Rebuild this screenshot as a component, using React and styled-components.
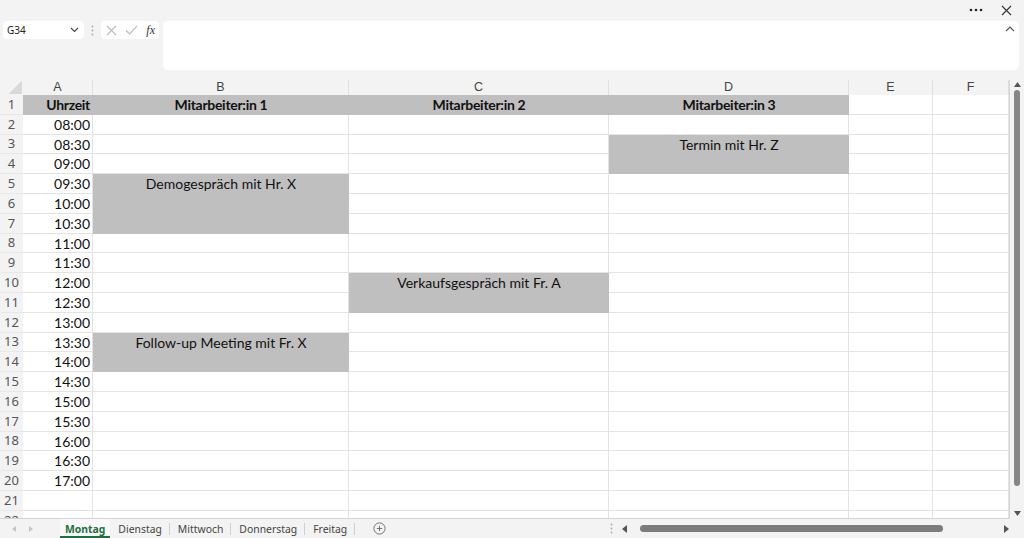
import React from 'react';
import styled, { createGlobalStyle, css } from 'styled-components';

const GlobalStyle = createGlobalStyle`
  html, body { margin: 0; padding: 0; background: #f3f3f3; }
  body { font-family: "Noto Sans", "Liberation Sans", sans-serif; overflow: hidden; }
  * { box-sizing: border-box; }
`;

const Page = styled.div`
  width: 1024px;
  height: 538px;
  display: flex;
  flex-direction: column;
  background: #f3f3f3;
  overflow: hidden;
`;

const TitleBar = styled.div`
  height: 20px;
  display: flex;
  justify-content: flex-end;
  align-items: center;
  gap: 18px;
  padding-right: 12px;
  color: #222;
`;

const FormulaBar = styled.div`
  height: 60px;
  display: flex;
  align-items: flex-start;
  padding: 1px 5px 0 3px;
`;

const NameBox = styled.div`
  width: 81px;
  height: 18px;
  background: #fff;
  border-radius: 4px;
  display: flex;
  align-items: center;
  justify-content: space-between;
  padding: 0 5px 0 4px;
  font-size: 10px;
  color: #222;
`;

const Grip = styled.div`
  width: 17px;
  height: 18px;
  display: flex;
  align-items: center;
  justify-content: center;
`;

const FxBox = styled.div`
  width: 58px;
  height: 18px;
  background: #fff;
  border-radius: 4px;
  display: flex;
  align-items: center;
  justify-content: space-between;
  padding: 0 4px 0 5px;
`;

const FxLabel = styled.span`
  font-family: "Liberation Serif", "DejaVu Serif", serif;
  font-style: italic;
  font-size: 12px;
  color: #333;
`;

const FormulaInput = styled.div`
  margin-left: 4px;
  flex: 1;
  height: 49px;
  background: #fff;
  border-radius: 5px;
  display: flex;
  justify-content: flex-end;
  align-items: flex-start;
  padding: 5px 4px;
`;

const Sheet = styled.div`
  height: 439px;
  display: flex;
`;

const Grid = styled.div`
  width: 1010px;
  height: 439px;
  overflow: hidden;
  display: grid;
  grid-template-columns: 23px 70px 256px 260px 240px 84px 76px;
  grid-template-rows: 15px repeat(22, 19.8px);
  border-right: 1px solid #d4d4d4;
  border-bottom: 1px solid #d4d4d4;
  background: #fff;
`;

const Corner = styled.div`
  background: #f3f3f3
    linear-gradient(to top left, #d9d9d9 50%, transparent 50%) no-repeat right 1px bottom 1px / 14px 13px;
`;

const ColHeader = styled.div`
  background: #f3f3f3;
  border-right: 1px solid #e0e0e0;
  text-align: center;
  font-family: "Liberation Sans", Arial, sans-serif;
  font-size: 12.5px;
  line-height: 15px;
  color: #444;
`;

const RowHeader = styled.div`
  background: #f3f3f3;
  border-bottom: 1px solid #e8e8e8;
  display: flex;
  align-items: center;
  justify-content: center;
  font-size: 13px;
  color: #555;
  line-height: 1;
`;

const Cell = styled.div`
  grid-row: span ${p => p.$span || 1};
  background: ${p => (p.$fill ? '#bfbfbf' : '#fff')};
  border-right: 1px solid ${p => (p.$fill ? '#bfbfbf' : '#e3e3e3')};
  border-bottom: 1px solid ${p => (p.$fill ? '#bfbfbf' : '#e3e3e3')};
  font-family: Lato, "Liberation Sans", sans-serif;
  font-size: 14px;
  line-height: 19px;
  color: #111;
  white-space: nowrap;
  overflow: visible;
  padding: 0 2px 0 3px;
  text-align: ${p => p.$align || 'left'};
  ${p => p.$bold && css`font-weight: 700; letter-spacing: -0.3px;`}
`;

const ScrollCol = styled.div`
  width: 14px;
  display: flex;
  flex-direction: column;
  align-items: center;
  padding: 2px 0 3px;
`;

const VThumb = styled.div`
  width: 6px;
  height: 396px;
  margin-top: 3px;
  border-radius: 3px;
  background: #868686;
`;

const Spacer = styled.div`
  flex: 1;
`;

const TabBar = styled.div`
  height: 19px;
  display: flex;
  align-items: center;
  font-size: 10.4px;
  color: #444;
`;

const NavArrows = styled.div`
  width: 60px;
  display: flex;
  align-items: center;
  gap: 13px;
  padding-left: 12px;
`;

const Tab = styled.div`
  height: 19px;
  display: flex;
  align-items: center;
  padding: 0 8px;
  position: relative;
  white-space: nowrap;
  ${p =>
    p.$active
      ? css`
          color: #1e6e42;
          font-weight: 700;
          font-size: 10.4px;
          padding: 0 5px;
          box-shadow: inset 0 -2px 0 #1e6e42;
          background: #f8f8f8;
        `
      : css`
          &::after {
            content: '';
            position: absolute;
            right: 0;
            top: 4px;
            height: 12px;
            border-right: 1px solid #cfcfcf;
          }
        `}
`;

const AddTab = styled.div`
  margin-left: 18px;
  display: flex;
  align-items: center;
`;

const HScroll = styled.div`
  margin-left: auto;
  width: 414px;
  display: flex;
  align-items: center;
  padding-right: 15px;
`;

const ArrowSlot = styled.span`
  width: 22px;
  display: flex;
  justify-content: center;
`;

const HThumb = styled.div`
  width: 303px;
  height: 7px;
  border-radius: 4px;
  background: #7c7c7c;
  margin-left: 5px;
`;

const cols = ['A', 'B', 'C', 'D', 'E', 'F'];

const times = [];
for (let i = 0; i < 19; i++) {
  const m = 8 * 60 + i * 30;
  times.push(`${String(Math.floor(m / 60)).padStart(2, '0')}:${m % 60 === 0 ? '00' : '30'}`);
}

const events = [
  { row: 3, col: 'D', span: 2, text: 'Termin mit Hr. Z' },
  { row: 5, col: 'B', span: 3, text: 'Demogespräch mit Hr. X' },
  { row: 10, col: 'C', span: 2, text: 'Verkaufsgespräch mit Fr. A' },
  { row: 13, col: 'B', span: 2, text: 'Follow-up Meeting mit Fr. X' },
];

const headers = { A: 'Uhrzeit', B: 'Mitarbeiter:in 1', C: 'Mitarbeiter:in 2', D: 'Mitarbeiter:in 3' };

function buildCells() {
  const out = [];
  const covered = new Set();
  for (let r = 1; r <= 22; r++) {
    out.push(<RowHeader key={`rh${r}`}>{r}</RowHeader>);
    cols.forEach(c => {
      const key = `${c}${r}`;
      if (covered.has(key)) return;
      if (r === 1) {
        if (headers[c]) {
          out.push(
            <Cell key={key} $fill $bold $align={c === 'A' ? 'right' : 'center'}>
              {headers[c]}
            </Cell>
          );
        } else out.push(<Cell key={key} />);
        return;
      }
      const ev = events.find(e => e.row === r && e.col === c);
      if (ev) {
        for (let k = 1; k < ev.span; k++) covered.add(`${c}${r + k}`);
        out.push(
          <Cell key={key} $fill $span={ev.span} $align="center">
            {ev.text}
          </Cell>
        );
        return;
      }
      if (c === 'A' && r >= 2 && r <= 20) {
        out.push(
          <Cell key={key} $align="right">
            {times[r - 2]}
          </Cell>
        );
        return;
      }
      out.push(<Cell key={key} />);
    });
  }
  return out;
}

const Dots = () => (
  <svg width="14" height="4" viewBox="0 0 14 4">
    <circle cx="2" cy="2" r="1.3" fill="#222" />
    <circle cx="7" cy="2" r="1.3" fill="#222" />
    <circle cx="12" cy="2" r="1.3" fill="#222" />
  </svg>
);

const Close = () => (
  <svg width="11" height="11" viewBox="0 0 11 11">
    <path d="M1 1L10 10M10 1L1 10" stroke="#333" strokeWidth="1.1" fill="none" />
  </svg>
);

const VGrip = () => (
  <svg width="3" height="11" viewBox="0 0 3 11">
    <circle cx="1.5" cy="1.5" r="0.9" fill="#aaa" />
    <circle cx="1.5" cy="5.5" r="0.9" fill="#aaa" />
    <circle cx="1.5" cy="9.5" r="0.9" fill="#aaa" />
  </svg>
);

const Tri = ({ dir, color = '#555', w = 6, h = 6 }) => {
  const paths = {
    up: `M0 ${h}L${w / 2} 0L${w} ${h}Z`,
    down: `M0 0L${w} 0L${w / 2} ${h}Z`,
    left: `M${w} 0L${w} ${h}L0 ${h / 2}Z`,
    right: `M0 0L${w} ${h / 2}L0 ${h}Z`,
  };
  return (
    <svg width={w} height={h} viewBox={`0 0 ${w} ${h}`}>
      <path d={paths[dir]} fill={color} />
    </svg>
  );
};

export default function App() {
  return (
    <Page>
      <GlobalStyle />
      <TitleBar>
        <Dots />
        <Close />
      </TitleBar>
      <FormulaBar>
        <NameBox>
          <span>G34</span>
          <svg width="9" height="6" viewBox="0 0 9 6">
            <path d="M1 1L4.5 4.5L8 1" stroke="#444" strokeWidth="1.1" fill="none" />
          </svg>
        </NameBox>
        <Grip>
          <VGrip />
        </Grip>
        <FxBox>
          <svg width="11" height="11" viewBox="0 0 11 11">
            <path d="M1 1L10 10M10 1L1 10" stroke="#bdbdbd" strokeWidth="1.1" fill="none" />
          </svg>
          <svg width="13" height="10" viewBox="0 0 13 10">
            <path d="M1 5.5L4.5 9L12 1" stroke="#bdbdbd" strokeWidth="1.1" fill="none" />
          </svg>
          <FxLabel>fx</FxLabel>
        </FxBox>
        <FormulaInput>
          <svg width="10" height="6" viewBox="0 0 10 6">
            <path d="M1 5L5 1L9 5" stroke="#555" strokeWidth="1.1" fill="none" />
          </svg>
        </FormulaInput>
      </FormulaBar>
      <Sheet>
        <Grid>
          <Corner />
          {cols.map(c => (
            <ColHeader key={c}>{c}</ColHeader>
          ))}
          {buildCells()}
        </Grid>
        <ScrollCol>
          <Tri dir="up" w={7} h={5} />
          <VThumb />
          <Spacer />
          <Tri dir="down" w={7} h={5} />
        </ScrollCol>
      </Sheet>
      <TabBar>
        <NavArrows>
          <Tri dir="left" color="#c4c4c4" w={4} h={6} />
          <Tri dir="right" color="#c4c4c4" w={4} h={6} />
        </NavArrows>
        <Tab $active>Montag</Tab>
        <Tab>Dienstag</Tab>
        <Tab>Mittwoch</Tab>
        <Tab>Donnerstag</Tab>
        <Tab>Freitag</Tab>
        <AddTab>
          <svg width="13" height="13" viewBox="0 0 13 13">
            <circle cx="6.5" cy="6.5" r="5.6" stroke="#666" strokeWidth="0.9" fill="none" />
            <path d="M6.5 3.8V9.2M3.8 6.5H9.2" stroke="#666" strokeWidth="0.9" />
          </svg>
        </AddTab>
        <HScroll>
          <VGrip />
          <ArrowSlot>
            <Tri dir="left" w={5} h={8} />
          </ArrowSlot>
          <HThumb />
          <Spacer />
          <Tri dir="right" w={5} h={8} />
        </HScroll>
      </TabBar>
    </Page>
  );
}
